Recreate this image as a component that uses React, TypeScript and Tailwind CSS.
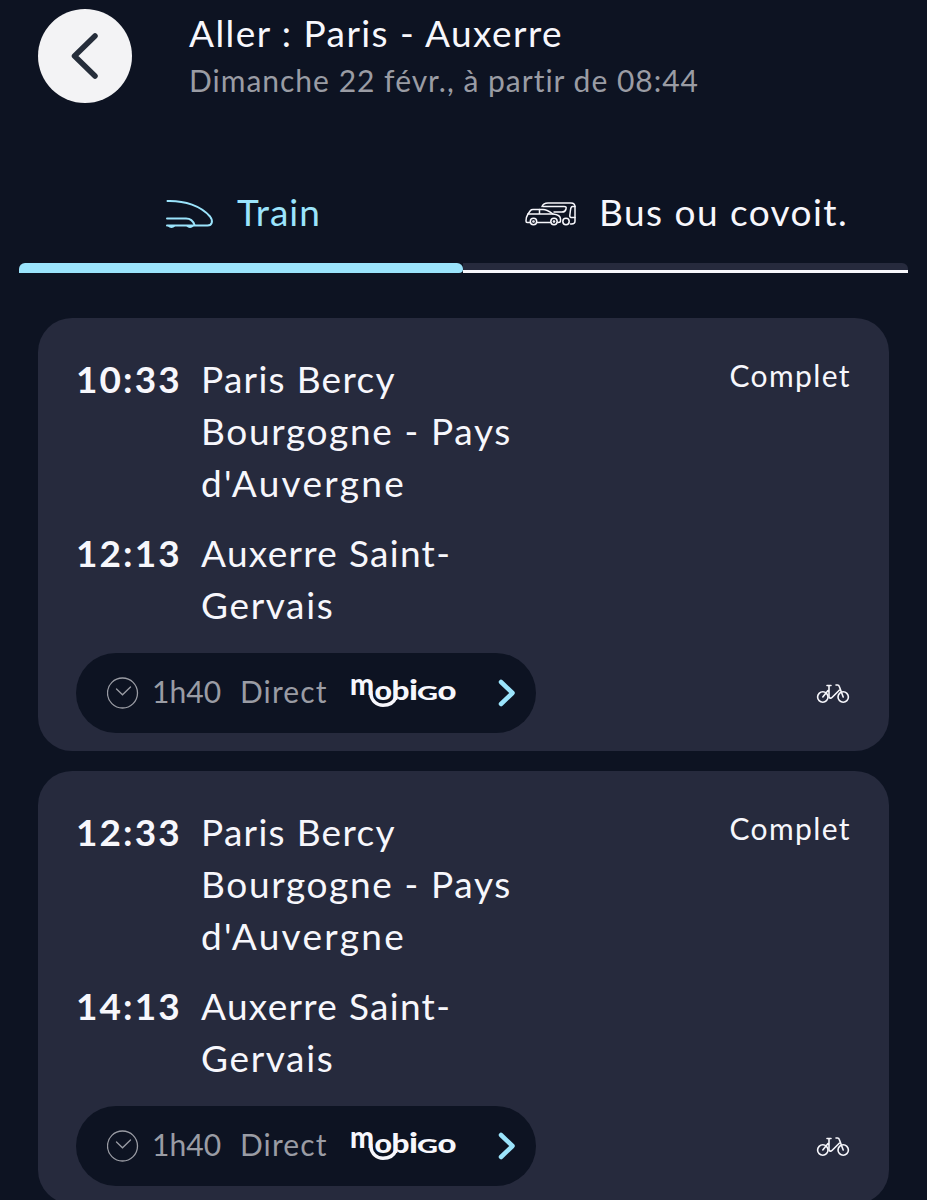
interface Trip {
  departure: string;
  arrival: string;
  from: string[];
  to: string[];
  duration: string;
}

const trips: Trip[] = [
  {
    departure: "10:33",
    arrival: "12:13",
    from: ["Paris Bercy", "Bourgogne - Pays", "d'Auvergne"],
    to: ["Auxerre Saint-", "Gervais"],
    duration: "1h40",
  },
  {
    departure: "12:33",
    arrival: "14:13",
    from: ["Paris Bercy", "Bourgogne - Pays", "d'Auvergne"],
    to: ["Auxerre Saint-", "Gervais"],
    duration: "1h40",
  },
];

const TrainIcon = () => (
  <svg width="50" height="32" viewBox="0 0 50 32" fill="none" stroke="currentColor" strokeWidth="2" strokeLinecap="round">
    <path d="M3.500 4C21 3.500 37 9 46 19.500C49.500 24 48 28.500 43.500 28.500H3" />
    <path d="M3 21.500H22C27 21.500 29 23.500 30.500 28" />
    <path d="M5 29c1 1.300 4 1.300 5 0M23.500 29c1 1.300 4 1.300 5 0" />
  </svg>
);

const BusCarIcon = () => (
  <svg width="52" height="26" viewBox="0 0 52 26" fill="none" stroke="currentColor" strokeWidth="1.500" strokeLinecap="round" strokeLinejoin="round">
    <path d="M17 5.500C18 3 20 2 23 2H46C49 2 50 3 50 6V20C50 22 49 23 46.500 23H45.500" />
    <path d="M18 5.500H39C41 5.500 41.500 6 41 8C40.500 10.500 39.500 11 37 11H29" />
    <path d="M50 5.500H47.500C46 5.500 45.800 6.500 45.500 9L44.800 14.500C44.600 16 45.500 16.500 47 16.500H50" />
    <circle cx="41" cy="20.500" r="3.200" />
    <path d="M5 21.500H2.200C1.200 21.500 1 21 1 20C1 16 2 14.500 3 13L5.500 9.500C6 8.800 7 8.500 8 8.500H18C22 8.500 24.500 10.500 28 13C33 13.500 35.500 14.500 35.500 18V20C35.500 21.500 34.500 21.500 33 21.500M12 21.500H25" />
    <path d="M3 13H28M14.500 8.500V13" />
    <circle cx="8.500" cy="20.500" r="3.200" />
    <circle cx="29" cy="20.500" r="3.200" />
    <circle cx="8.500" cy="20.500" r=".6" />
    <circle cx="29" cy="20.500" r=".6" />
  </svg>
);

const ClockIcon = () => (
  <svg width="32" height="32" viewBox="0 0 32 32" fill="none" stroke="currentColor" strokeWidth="1.300" strokeLinecap="round">
    <circle cx="15.500" cy="16" r="15" />
    <path d="M9.500 12l6 5.800L23.500 10" />
  </svg>
);

const BikeIcon = () => (
  <svg width="34" height="22" viewBox="0 0 34 22" fill="none" stroke="currentColor" strokeWidth="1.600" strokeLinecap="round" strokeLinejoin="round" className="mt-0.5 mr-px">
    <circle cx="6.800" cy="14" r="5.200" />
    <circle cx="27.200" cy="14" r="5.200" />
    <path d="M6.800 14L12 7.500M11 2.500H15M13 2.500V13.500C13 15.500 15 15.500 16 14.500L23.500 7M20 2H21.500C22.500 2 23 2.500 23.300 3.500L27.200 14" />
  </svg>
);

const MobigoLogo = () => (
  <svg width="106" height="56" viewBox="-1 -12 106 56" fill="currentColor" className="block overflow-visible font-['Lato'] font-black text-[#f7f7fc]">
    <text x="-1" y="18" fontSize="30" textLength="24" lengthAdjust="spacingAndGlyphs">m</text>
    <text x="23.500" y="23" fontSize="26" textLength="17.500" lengthAdjust="spacingAndGlyphs">o</text>
    <text x="40.500" y="23" fontSize="27" textLength="18" lengthAdjust="spacingAndGlyphs">b</text>
    <text x="58" y="23" fontSize="28" textLength="9" lengthAdjust="spacingAndGlyphs">i</text>
    <text x="66" y="23" fontSize="19" textLength="21" lengthAdjust="spacingAndGlyphs">G</text>
    <text x="86.500" y="23" fontSize="26" textLength="19" lengthAdjust="spacingAndGlyphs">o</text>
    <path d="M19.700 14V16.500C20.500 24 26 28.200 32 28.200C38.500 28.200 42.500 26 44.500 21" fill="none" stroke="currentColor" strokeWidth="3.400" />
  </svg>
);

const StopRow = ({ time, name }: { time: string; name: string[] }) => (
  <div className="flex text-[37px] leading-[52px]">
    <span className="w-[125px] shrink-0 font-bold tracking-[2.1px]">{time}</span>
    <div className="flex flex-col items-start">
      {name.map((line, i) => (
        <span key={line} className={i === 0 ? "tracking-[1.3px]" : i === 1 ? "tracking-[1.65px]" : "tracking-[2.3px]"}>
          {line}
        </span>
      ))}
    </div>
  </div>
);

const TripCard = ({ trip }: { trip: Trip }) => (
  <div className="flex h-[433px] shrink-0 flex-col rounded-[34px] bg-[#262a3d] pt-[35px] pr-[38px] pl-[38px]">
    <div className="flex justify-between">
      <div className="flex flex-col gap-[18px]">
        <StopRow time={trip.departure} name={trip.from} />
        <StopRow time={trip.arrival} name={trip.to} />
      </div>
      <span className="pt-0.5 text-[30px] leading-10 tracking-[1.400px]">Complet</span>
    </div>
    <div className="mt-[22px] flex items-center justify-between">
      <div className="flex h-20 w-[460px] items-center rounded-full bg-[#0d1322] pl-[31px] text-[30px] text-[#9a9ca4]">
        <ClockIcon />
        <span className="ml-[13px] w-[88px] pb-[3px] tracking-[0.1px]">{trip.duration}</span>
        <span className="w-[110px] pb-[3px] tracking-[1.100px]">Direct</span>
        <MobigoLogo />
        <svg width="20" height="30" viewBox="0 0 20 30" fill="none" stroke="#9be4fc" strokeWidth="4.500" strokeLinecap="round" strokeLinejoin="round" className="ml-[41px]">
          <path d="M4 4L15.500 15L4 26" />
        </svg>
      </div>
      <BikeIcon />
    </div>
  </div>
);

export default function App() {
  return (
    <div className="h-[1200px] w-[927px] overflow-hidden bg-[#0d1322] font-['Lato',sans-serif] text-[#f7f7fc]">
      <header className="flex h-[160px] pt-[9px] pl-[38px]">
        <button className="flex size-[94px] items-center justify-center rounded-full bg-[#f3f3f5]">
          <svg width="30" height="50" viewBox="0 0 30 50" fill="none" stroke="#252d3a" strokeWidth="5.500" strokeLinecap="round" strokeLinejoin="round">
            <path d="M25 5L4.500 25L25 45" />
          </svg>
        </button>
        <div className="ml-[57px] pt-px">
          <h1 className="text-[37px] leading-[46px] tracking-[1.450px]">Aller : Paris - Auxerre</h1>
          <p className="text-[30px] leading-[48px] tracking-[1px] text-[#9a9ca4]">
            Dimanche 22 févr., à partir de 08:44
          </p>
        </div>
      </header>
      <nav className="mx-[19px] flex h-[113px] text-[37px] leading-[46px]">
        <div className="flex w-[444px] flex-col justify-between text-[#9be4fc]">
          <div className="flex items-center pt-[29px] pl-[145px]">
            <div className="pt-0.5">
              <TrainIcon />
            </div>
            <span className="ml-[23px] tracking-[1px]">Train</span>
          </div>
          <div className="h-[10px] rounded-t-md rounded-br-sm bg-[#9be4fc]" />
        </div>
        <div className="flex w-[445px] flex-col justify-between">
          <div className="flex items-center pt-[29px] pl-[62px]">
            <div className="pt-[3px]">
              <BusCarIcon />
            </div>
            <span className="ml-[22px] tracking-[1.450px]">Bus ou covoit.</span>
          </div>
          <div className="h-[10px] rounded-tr-md border-b-[3px] border-[#f7f7fc] bg-[#262a3d]" />
        </div>
      </nav>
      <main className="mt-[45px] flex flex-col gap-[20px] px-[38px]">
        {trips.map((trip) => (
          <TripCard key={trip.departure} trip={trip} />
        ))}
      </main>
    </div>
  );
}
